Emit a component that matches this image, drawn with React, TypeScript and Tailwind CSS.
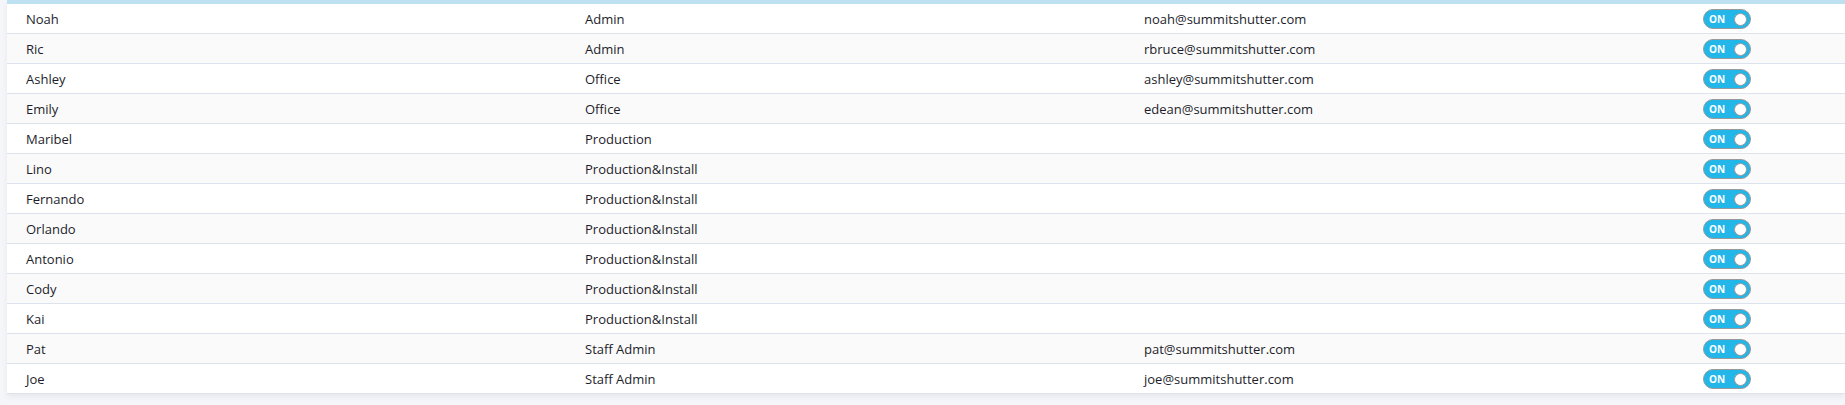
const users = [
  { name: "Noah", role: "Admin", email: "noah@summitshutter.com" },
  { name: "Ric", role: "Admin", email: "rbruce@summitshutter.com" },
  { name: "Ashley", role: "Office", email: "ashley@summitshutter.com" },
  { name: "Emily", role: "Office", email: "edean@summitshutter.com" },
  { name: "Maribel", role: "Production", email: "" },
  { name: "Lino", role: "Production&Install", email: "" },
  { name: "Fernando", role: "Production&Install", email: "" },
  { name: "Orlando", role: "Production&Install", email: "" },
  { name: "Antonio", role: "Production&Install", email: "" },
  { name: "Cody", role: "Production&Install", email: "" },
  { name: "Kai", role: "Production&Install", email: "" },
  { name: "Pat", role: "Staff Admin", email: "pat@summitshutter.com" },
  { name: "Joe", role: "Staff Admin", email: "joe@summitshutter.com" },
];

function Toggle() {
  return (
    <div className="mt-[1px] flex h-[20px] w-[48px] items-center justify-between rounded-full border border-[#9a9a9a] bg-[#22b6e9] pl-[5px] pr-[3px]">
      <span className="text-[10px] font-bold leading-none text-white">ON</span>
      <span className="h-[13px] w-[13px] rounded-full border border-[#9a9a9a] bg-white" />
    </div>
  );
}

export default function App() {
  return (
    <div className="flex h-[405px] w-full bg-[#f4f6fa] font-['Open_Sans',sans-serif] text-[13px] text-[#1d1d2b]">
      <div className="w-[7px] shrink-0" />
      <div className="flex-1">
        <div className="bg-white shadow-[0_3px_6px_rgba(0,0,0,0.06)]">
          <div className="h-[4px] bg-[#bde1f0]" />
          {users.map((u, i) => (
            <div
              key={u.name}
              className={`grid h-[30px] grid-cols-[559px_559px_559px_1fr] items-center border-b border-[#dde3ec] ${
                i % 2 === 1 ? "bg-[#fafafa]" : "bg-white"
              }`}
            >
              <div className="pl-[19px] pt-[2px]">{u.name}</div>
              <div className="pl-[19px] pt-[2px]">{u.role}</div>
              <div className="pl-[19px] pt-[2px]">{u.email}</div>
              <div className="pl-[19px]">
                <Toggle />
              </div>
            </div>
          ))}
        </div>
      </div>
    </div>
  );
}
